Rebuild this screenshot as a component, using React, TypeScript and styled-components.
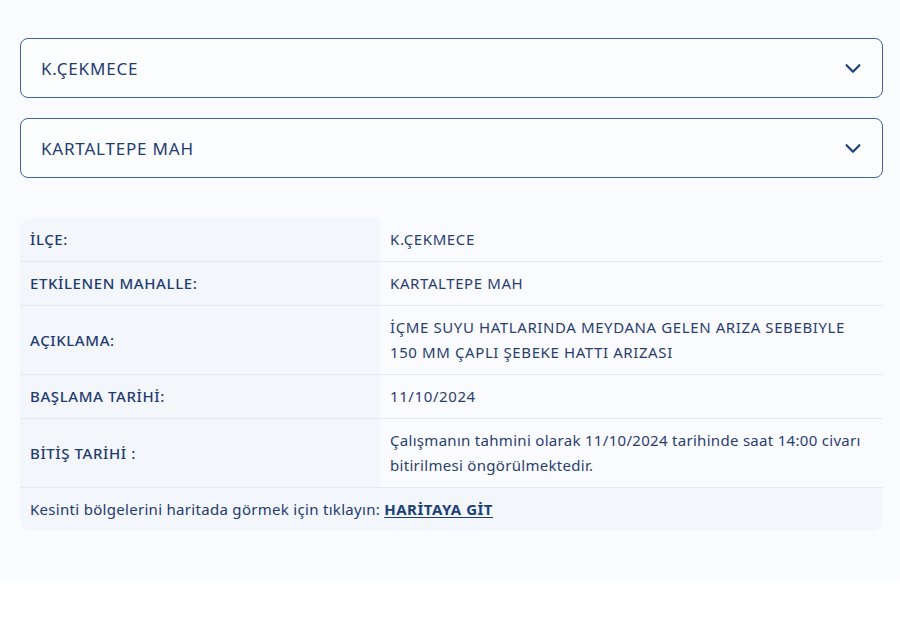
import styled, { createGlobalStyle } from "styled-components";

const GlobalStyle = createGlobalStyle`
  html, body {
    margin: 0;
    padding: 0;
    background: #ffffff;
  }
  * {
    box-sizing: border-box;
  }
`;

const Page = styled.div`
  background: #fafbfe;
  padding: 38px 17px 50px 20px;
  font-family: "Noto Sans", "Open Sans", sans-serif;
  color: #1f3b70;
`;

const SelectBox = styled.div`
  display: flex;
  align-items: center;
  justify-content: space-between;
  height: 60px;
  padding: 0 18px 0 20px;
  border: 1px solid #3f629f;
  border-radius: 8px;
  background: #fcfdff;
  margin-bottom: 20px;
  font-size: 17px;
  letter-spacing: 0.8px;
  color: #1f3b70;
`;

const Chevron = () => (
  <svg width="22" height="22" viewBox="0 0 24 24" fill="none" stroke="#1d3f78" strokeWidth="2.4" strokeLinecap="round" strokeLinejoin="round">
    <path d="M5 9l7 7 7-7" />
  </svg>
);

const InfoTable = styled.div`
  margin-top: 40px;
  border-radius: 12px;
  overflow: hidden;
  background: #f3f6fb;
`;

const Row = styled.div`
  display: grid;
  grid-template-columns: 360px 1fr;
  border-bottom: 1px solid #e6e9ef;
`;

const Label = styled.div`
  display: flex;
  align-items: center;
  padding: 9px 10px;
  font-size: 15px;
  font-weight: 500;
  letter-spacing: 0.6px;
  line-height: 25px;
  color: #1f3b70;
`;

const Value = styled.div<{ $caps?: boolean }>`
  padding: 9px 10px;
  background: #fafbfe;
  font-size: 15px;
  letter-spacing: ${(p) => (p.$caps ? "0.6px" : "0.3px")};
  line-height: 25px;
  color: #2a3e6e;
`;

const Footer = styled.div`
  padding: 9px 10px;
  font-size: 15px;
  letter-spacing: 0.3px;
  line-height: 25px;
  color: #1f3b70;
`;

const MapLink = styled.a`
  font-weight: 700;
  letter-spacing: 0.5px;
  color: #1d3f78;
  text-decoration: underline;
  text-underline-offset: 2px;
`;

const rows = [
  { label: "İLÇE:", value: "K.ÇEKMECE", caps: true },
  { label: "ETKİLENEN MAHALLE:", value: "KARTALTEPE MAH", caps: true },
  {
    label: "AÇIKLAMA:",
    value: "İÇME SUYU HATLARINDA MEYDANA GELEN ARIZA SEBEBIYLE 150 MM ÇAPLI ŞEBEKE HATTI ARIZASI",
    caps: true,
  },
  { label: "BAŞLAMA TARİHİ:", value: "11/10/2024", caps: true },
  {
    label: "BİTİŞ TARİHİ :",
    value: "Çalışmanın tahmini olarak 11/10/2024 tarihinde saat 14:00 civarı bitirilmesi öngörülmektedir.",
    caps: false,
  },
];

export default function App() {
  return (
    <>
      <GlobalStyle />
      <Page>
        <SelectBox>
          <span>K.ÇEKMECE</span>
          <Chevron />
        </SelectBox>
        <SelectBox>
          <span>KARTALTEPE MAH</span>
          <Chevron />
        </SelectBox>
        <InfoTable>
          {rows.map((r) => (
            <Row key={r.label}>
              <Label>{r.label}</Label>
              <Value $caps={r.caps}>{r.value}</Value>
            </Row>
          ))}
          <Footer>
            Kesinti bölgelerini haritada görmek için tıklayın: <MapLink href="#">HARİTAYA GİT</MapLink>
          </Footer>
        </InfoTable>
      </Page>
    </>
  );
}
